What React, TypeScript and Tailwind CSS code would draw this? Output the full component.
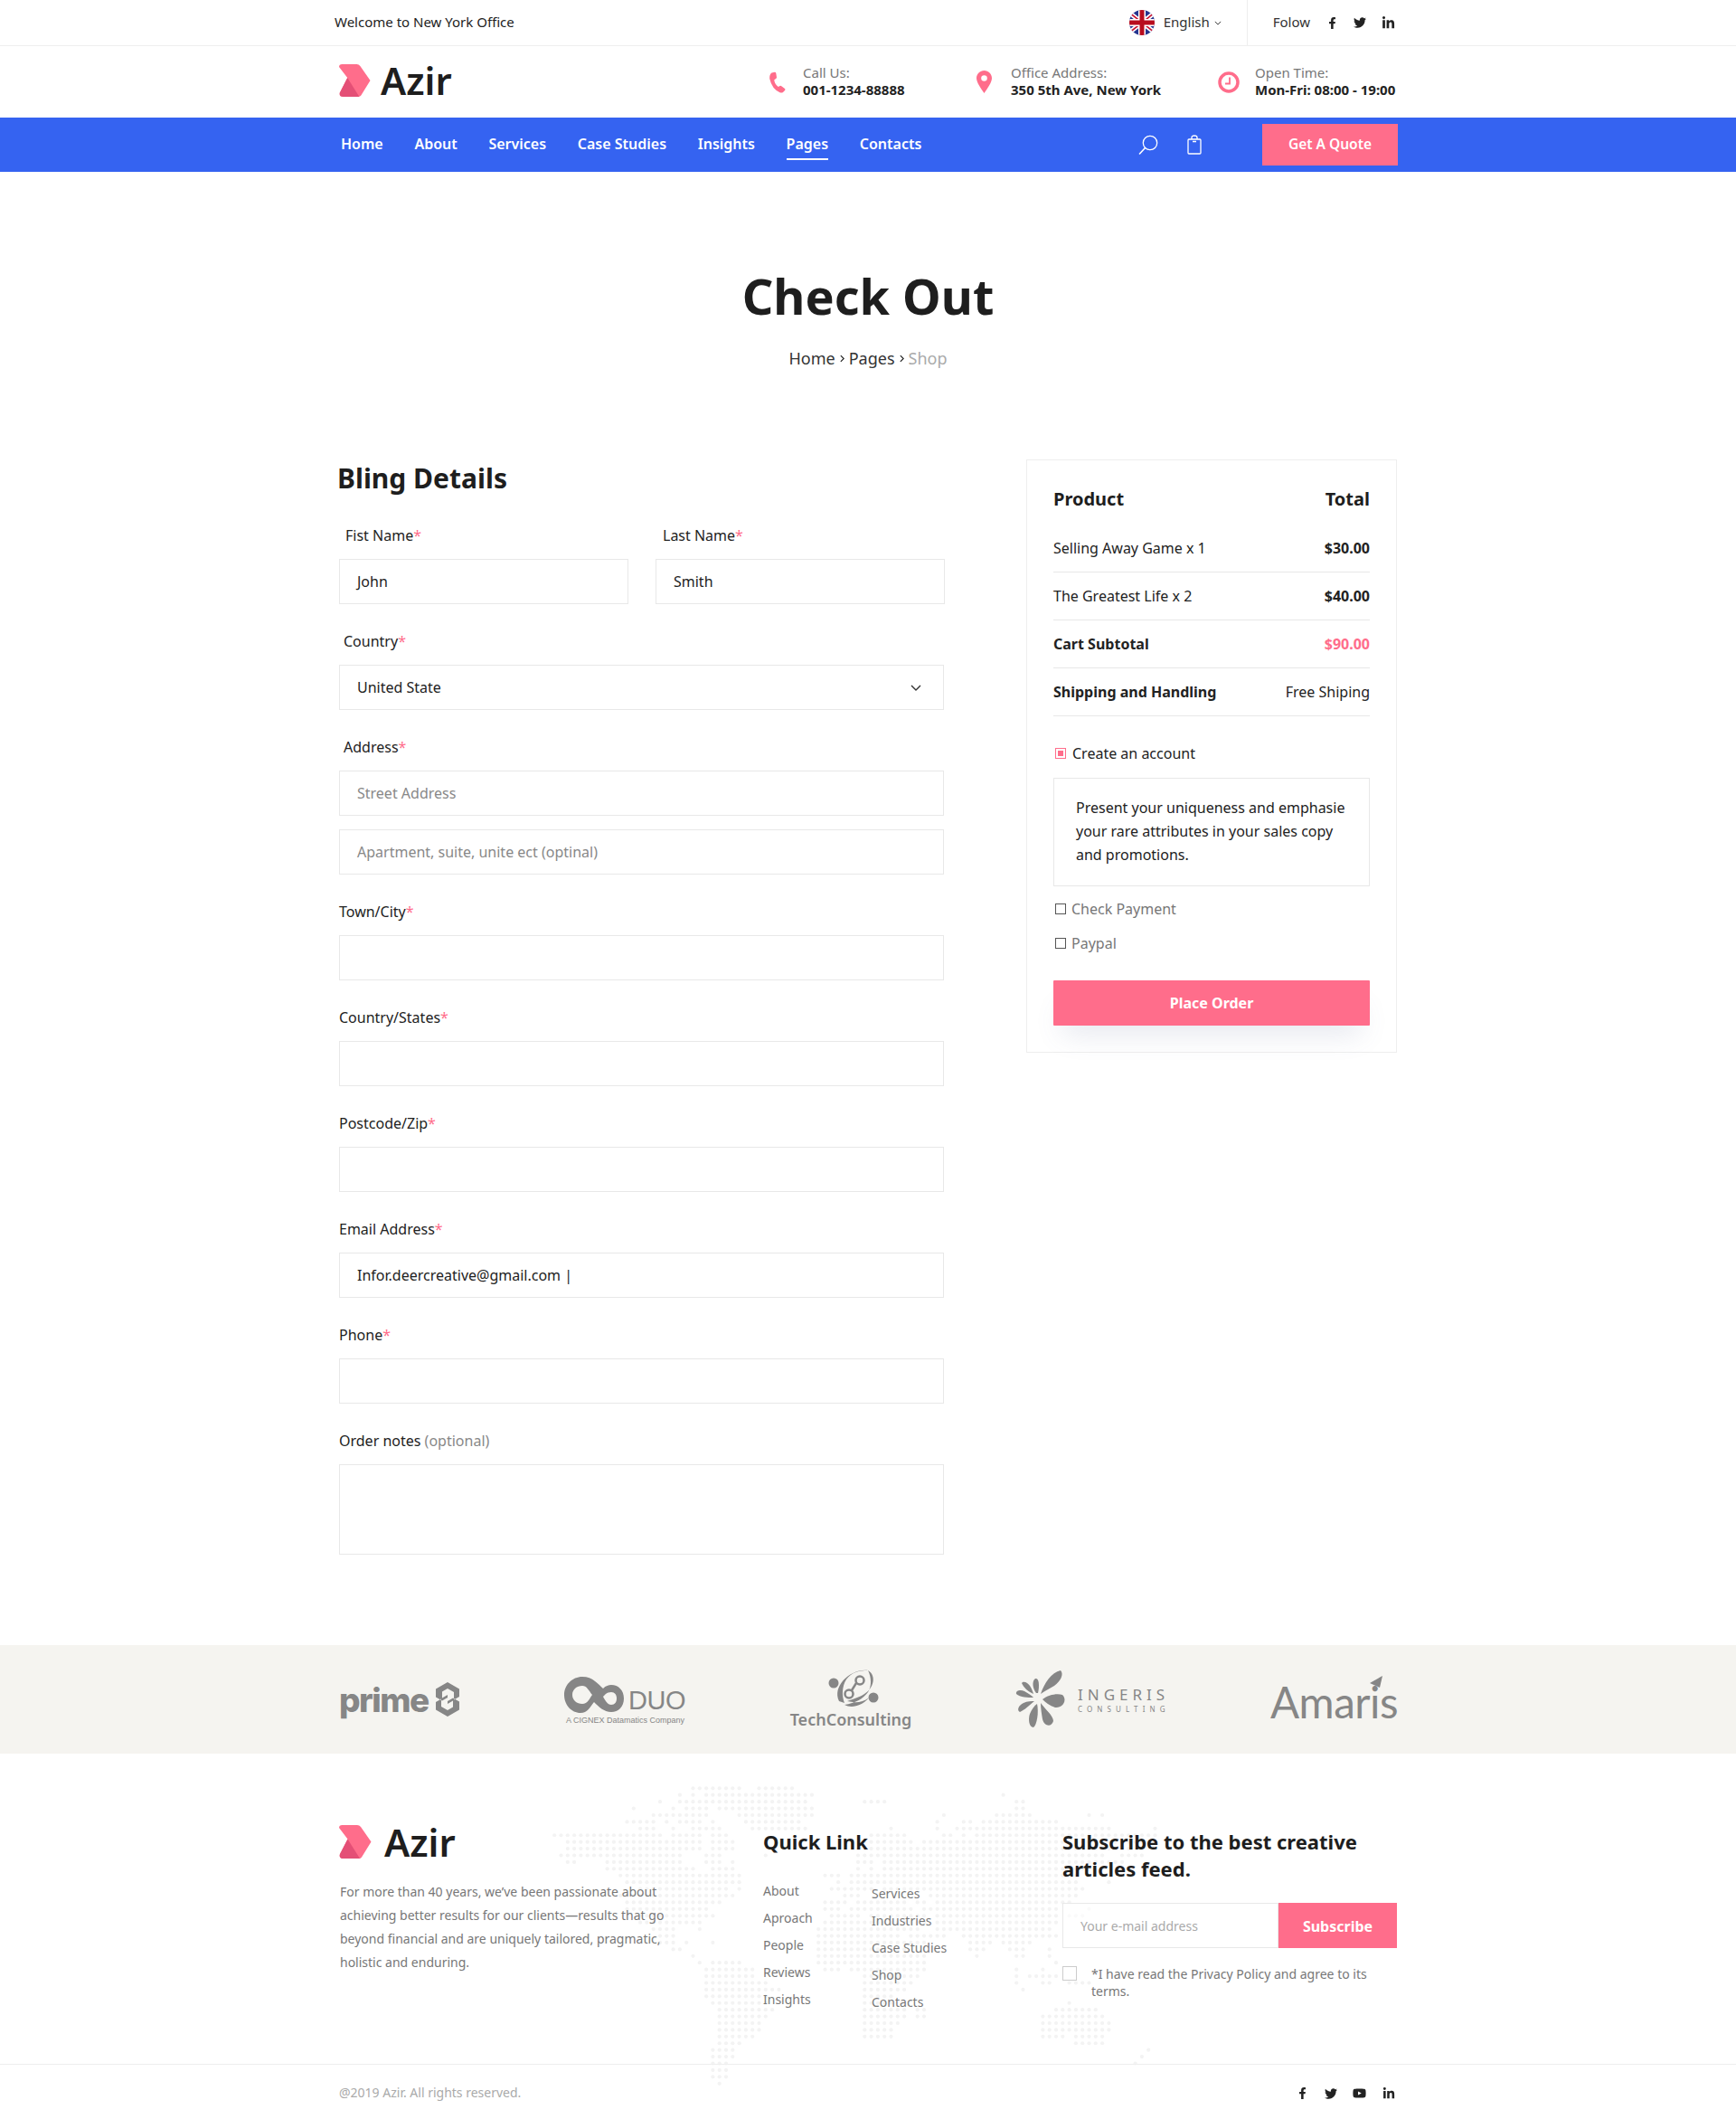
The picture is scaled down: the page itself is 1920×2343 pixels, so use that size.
import React from "react";
import { FaFacebookF, FaTwitter, FaLinkedinIn, FaYoutube } from "react-icons/fa";

const RAW: number[][] = [
  [767,809,820,820,836,836,850,876],
  [753,753,769,769,783,793,805,898,1112,1112],
  [731,731,753,787,797,890,955,975,1121,1129],
  [702,702,747,747,761,779,799,898,1127,1135],
  [724,779,820,898,1045,1045,1104,1142,1201,1201,1217,1217],
  [694,712,724,724,739,739,753,775,785,785,826,884,1037,1037,1066,1073,1089,1158,1171,1171],
  [708,726,747,747,769,793,834,890,985,985,1037,1037,1058,1219,1230,1230,1276,1276],
  [611,720,732,732,745,771,791,801,962,1002,1043,1052,1068,1068,1081,1276],
  [627,771,791,809,955,1010,1020,1276],
  [627,771,791,809,947,1245],
  [619,749,783,793,844,844,947,1222,1244,1265],
  [627,637,670,749,783,793,807,807,947,963,976,1238],
  [670,765,791,809,947,947,963,963,976,1207],
  [686,817,915,927,945,1188],
  [694,817,925,925,939,1188,1230,1230],
  [708,805,820,820,923,967,976,1196],
  [686,809,931,951,1027,1188],
  [694,793,915,935,950,1002,1012,1025,1035,1180],
  [694,779,915,927,945,1010,1020,1159,1171,1171,1201,1201],
  [708,787,923,951,962,1025,1035,1165,1186,1194],
  [708,771,915,963,970,1025,1035,1165],
  [724,741,777,777,908,1018,1035,1159],
  [732,741,902,995,1010,1041,1066,1165],
  [732,741,761,761,785,785,902,1025,1073,1096,1112,1136],
  [745,755,902,1002,1073,1085,1119,1135,1163,1163],
  [769,769,902,1025,1081,1081,1127,1135,1163,1163],
  [777,777,791,817,908,1025,1171,1171],
  [783,830,915,927,945,1025,1127,1127,1157,1157],
  [783,830,955,1018,1127,1127,1140,1165],
  [783,846,955,1010,1127,1127,1150,1150,1163,1163,1186,1201],
  [783,860,955,1002,1135,1135],
  [783,846,955,987],
  [791,846,955,987,1186,1186],
  [797,854,955,1002,1012,1024,1171,1211],
  [797,846,955,1002,1012,1024,1156,1219],
  [797,838,955,995,1156,1224],
  [797,838,955,987,1156,1224],
  [797,830,955,987,1156,1173,1192,1219],
  [797,817,1192,1219],
  [791,809,1268,1268],
  [791,809,1261,1261],
  [791,801,1253,1253],
  [791,801],
  [791,801],
  [799,799],
];

function DotMap() {
  const dots: React.ReactNode[] = [];
  RAW.forEach((row, i) => {
    const y = 38.3 + i * 7.42;
    for (let k = 0; k < row.length; k += 2) {
      const first = Math.round(row[k] / 7.3);
      const last = Math.round(row[k + 1] / 7.3);
      for (let n = first; n <= last; n++) {
        dots.push(<circle key={`${i}-${k}-${n}`} cx={n * 7.3} cy={y} r={2.1} fill="#f3f3f3" />);
      }
    }
  });
  return (
    <svg className="absolute left-0 top-0" width={1920} height={404} aria-hidden="true">
      {dots}
    </svg>
  );
}

function Mark({ className }: { className?: string }) {
  return (
    <svg viewBox="0 0 36 38" className={className}>
      <path d="M0 3.5Q0 .5 3.5.5H20Q22.5.5 24 2.500L35.500 19L25 36Q24 37.500 22 37.500H5Q-.5 37.500 1 32.500L9.500 16Z" fill="#ff6d8b" />
      <path d="M9.500 16L1 32.500Q-.5 37.500 5 37.500H23Z" fill="#e44f76" />
    </svg>
  );
}

function Flag() {
  return (
    <svg viewBox="0 0 28 28" className="h-7 w-7">
      <defs>
        <clipPath id="flagc"><circle cx="14" cy="14" r="14" /></clipPath>
      </defs>
      <g clipPath="url(#flagc)">
        <rect width="28" height="28" fill="#24348f" />
        <path d="M0 3L28 25M28 3L0 25" stroke="#fff" strokeWidth="5" />
        <path d="M0 3L28 25M28 3L0 25" stroke="#c8102e" strokeWidth="1.6" />
        <path d="M14 0V28M0 14H28" stroke="#fff" strokeWidth="8" />
        <path d="M14 0V28M0 14H28" stroke="#b80d1e" strokeWidth="5" />
      </g>
    </svg>
  );
}

function Star() {
  return <span className="text-[#ff6d8b]">*</span>;
}

function Field({ label, children, className = "mt-[29px] mr-px" }: { label: React.ReactNode; children: React.ReactNode; className?: string }) {
  return (
    <div className={className}>
      <div className="mb-[14px] h-6 text-[16px] leading-6 text-[#222]">{label}</div>
      {children}
    </div>
  );
}

function Box({ children, className = "" }: { children?: React.ReactNode; className?: string }) {
  return (
    <div className={`flex h-[50px] items-center border border-[#e8e8e8] px-[19px] pb-px text-[16px] text-[#222] ${className}`}>{children}</div>
  );
}

function SummaryRow({ left, right, leftClass = "", rightClass = "" }: { left: string; right: string; leftClass?: string; rightClass?: string }) {
  return (
    <div className="flex h-[53px] items-center justify-between border-b border-[#e8e8e8] text-[16px] text-[#222]">
      <span className={leftClass}>{left}</span>
      <span className={rightClass}>{right}</span>
    </div>
  );
}

function Info({ icon, top, bottom, className }: { icon: React.ReactNode; top: string; bottom: string; className: string }) {
  return (
    <div className={`flex items-center ${className}`}>
      {icon}
      <div className="mb-[2px] text-[15px] leading-[19px]">
        <div className="text-[#777]">{top}</div>
        <div className="font-bold text-[#222]">{bottom}</div>
      </div>
    </div>
  );
}

export default function App() {
  const nav = ["Home", "About", "Services", "Case Studies", "Insights", "Pages", "Contacts"];
  return (
    <div className="min-h-[2343px] bg-white font-['Noto_Sans',sans-serif] text-[#222]">
      {/* top bar */}
      <div className="h-[51px] border-b border-[#eeeeee]">
        <div className="mx-auto flex h-full w-[1172px] items-center text-[15px]">
          <span className="-ml-1 pb-[2px] text-[#222]">Welcome to New York Office</span>
          <div className="ml-auto flex h-full items-center">
            <Flag />
            <span className="ml-[10px] pb-[2px] text-[#333]">English</span>
            <svg viewBox="0 0 10 6" className="ml-[5px] h-[5px] w-2" fill="none" stroke="#333" strokeWidth="1.2"><path d="M1 1l4 4 4-4" /></svg>
            <div className="ml-[28px] h-full w-px bg-[#eeeeee]" />
            <span className="ml-[28px] pb-[2px] text-[#333]">Folow</span>
            <FaFacebookF className="ml-[18px] text-[13px] text-[#222]" />
            <FaTwitter className="ml-[17px] text-[14px] text-[#222]" />
            <FaLinkedinIn className="ml-[17px] text-[15px] text-[#222]" />
            <span className="w-[3px]" />
          </div>
        </div>
      </div>
      {/* header */}
      <div className="h-[79px]">
        <div className="mx-auto flex h-full w-[1172px] items-center">
          <div className="mb-[4px] flex items-center">
            <Mark className="ml-px h-[38px] w-[35px]" />
            <span className="ml-[11px] text-[42px] font-semibold leading-none text-[#1e1e1e]">Azir</span>
          </div>
          <div className="ml-auto flex items-center">
            <Info
              className="w-[233px]"
              icon={
                <svg viewBox="0 0 24 24" className="ml-px mr-[16px] h-6 w-6" fill="#ff6d8b">
                  <path d="M5.500 1.500L8.800 .8Q10 .8 10.300 2L11 6.600Q11 7.700 9.800 8.300L8.300 9.200Q8.300 13.800 12.800 17L14.500 16Q15.500 15.600 16.300 16.300L20 18.900Q21 20 20 21L18 23Q16.500 24 14.500 23.200Q5.800 19.500 3.200 8Q2.900 3 5.500 1.500Z" />
                </svg>
              }
              top="Call Us:"
              bottom="001-1234-88888"
            />
            <Info
              className="w-[267px]"
              icon={
                <svg viewBox="0 0 17 25" className="mr-[21px] h-[25px] w-[17px]" fill="#ff6d8b">
                  <path fillRule="evenodd" d="M8.500 0C3.800 0 0 3.800 0 8.500 0 13 5 20 8.500 25 12 20 17 13 17 8.500 17 3.800 13.200 0 8.500 0zm0 5.200a3.300 3.300 0 110 6.600 3.300 3.300 0 010-6.600z" />
                </svg>
              }
              top="Office Address:"
              bottom="350 5th Ave, New York"
            />
            <Info
              className="w-[199px]"
              icon={
                <svg viewBox="0 0 24 24" className="mr-[17px] h-6 w-6" fill="none" stroke="#ff6d8b">
                  <circle cx="12" cy="12" r="10" strokeWidth="3.500" />
                  <path d="M13 6.500V13.500H8" strokeWidth="1.800" />
                </svg>
              }
              top="Open Time:"
              bottom="Mon-Fri: 08:00 - 19:00"
            />
          </div>
        </div>
      </div>
      {/* nav */}
      <div className="h-[60px] bg-[#3563f1]">
        <div className="mx-auto flex h-full w-[1172px] items-center">
          <div className="ml-[3px] flex gap-[34.700px] pb-[2px]">
            {nav.map((n) => (
              <span key={n} className="relative text-[16px] font-semibold text-white">
                {n}
                {n === "Pages" && <span className="absolute -bottom-[6px] left-0 right-0 h-[2px] bg-white" />}
              </span>
            ))}
          </div>
          <div className="ml-auto flex items-center">
            <svg viewBox="0 0 22 22" className="h-[22px] w-[22px]" fill="none" stroke="#fff" strokeWidth="1.300">
              <circle cx="13" cy="9" r="7.700" />
              <path d="M7.500 14.500L1.500 21" strokeLinecap="round" strokeWidth="1.600" />
            </svg>
            <svg viewBox="0 0 16 22" className="ml-[32px] h-[22px] w-4" fill="none" stroke="#fff" strokeWidth="1.300">
              <rect x="1" y="5" width="14" height="16" rx="1" />
              <path d="M5 5V3Q5 1 8 1T11 3V5M6 7.500H10" />
            </svg>
            <div className="ml-[67px] flex h-[46px] w-[150px] items-center justify-center bg-[#ff6d8b] pb-px text-[15.500px] font-semibold text-white">Get A Quote</div>
          </div>
        </div>
      </div>
      {/* title */}
      <div className="pt-[97px] text-center">
        <h1 className="h-20 text-[54px] font-bold leading-[80px] text-[#1e1e1e]">Check Out</h1>
        <div className="mt-[15px] flex h-7 items-center justify-center text-[18px] leading-7 text-[#333]">
          <span>Home</span>
          <svg viewBox="0 0 6 10" className="mx-[5px] h-[9px] w-[5px]" fill="none" stroke="#222" strokeWidth="1.400"><path d="M1 1l4 4-4 4" /></svg>
          <span>Pages</span>
          <svg viewBox="0 0 6 10" className="mx-[5px] h-[9px] w-[5px]" fill="none" stroke="#222" strokeWidth="1.400"><path d="M1 1l4 4-4 4" /></svg>
          <span className="text-[#aaa]">Shop</span>
        </div>
      </div>
      {/* main */}
      <div className="mx-auto mt-[98px] flex w-[1172px] items-start justify-between">
        <div className="w-[671px] pt-px">
          <h2 className="-ml-px h-10 text-[30px] font-bold leading-10 text-[#1e1e1e]">Bling Details</h2>
          <div className="ml-px">
            <div className="mt-[31px] grid grid-cols-2 gap-[30px]">
              <Field className="" label={<span className="ml-[7px]">Fist Name<Star /></span>}>
                <Box>John</Box>
              </Field>
              <Field className="" label={<span className="ml-[8px]">Last Name<Star /></span>}>
                <Box>Smith</Box>
              </Field>
            </div>
            <Field label={<span className="ml-[5px]">Country<Star /></span>}>
              <Box className="justify-between pr-[24px]">
                United State
                <svg viewBox="0 0 12 8" className="mt-[2px] h-2 w-3" fill="none" stroke="#333" strokeWidth="1.400"><path d="M1 1l5 5 5-5" /></svg>
              </Box>
            </Field>
            <Field label={<span className="ml-[5px]">Address<Star /></span>}>
              <Box className="text-[#888]">Street Address</Box>
              <Box className="mt-[15px] text-[#888]">Apartment, suite, unite ect (optinal)</Box>
            </Field>
            <Field label={<>Town/City<Star /></>}>
              <Box />
            </Field>
            <Field label={<>Country/States<Star /></>}>
              <Box />
            </Field>
            <Field label={<>Postcode/Zip<Star /></>}>
              <Box />
            </Field>
            <Field label={<>Email Address<Star /></>}>
              <Box>Infor.deercreative@gmail.com |</Box>
            </Field>
            <Field label={<>Phone<Star /></>}>
              <Box />
            </Field>
            <Field label={<>Order notes <span className="text-[#888]">(optional)</span></>}>
              <Box className="!h-[100px]" />
            </Field>
          </div>
        </div>
        <aside className="mr-px w-[410px] border border-[#eeeeee] px-[29px] pb-[29px] pt-[30px]">
          <div className="flex h-[26px] items-center justify-between text-[20px] font-bold text-[#1e1e1e]">
            <span>Product</span>
            <span>Total</span>
          </div>
          <div className="mt-[15px]">
            <SummaryRow left="Selling Away Game x 1" right="$30.00" rightClass="font-bold" />
            <SummaryRow left="The Greatest Life x 2" right="$40.00" rightClass="font-bold" />
            <SummaryRow left="Cart Subtotal" right="$90.00" leftClass="font-bold" rightClass="font-bold text-[#ff6d8b]" />
            <SummaryRow left="Shipping and Handling" right="Free Shiping" leftClass="font-bold" />
          </div>
          <div className="mt-[29px] flex h-6 items-center text-[16px] text-[#222]">
            <span className="ml-[2px] mr-[7px] flex h-3 w-3 items-center justify-center border border-[#ff6d8b]">
              <span className="h-[6px] w-[6px] bg-[#ff6d8b]" />
            </span>
            Create an account
          </div>
          <div className="mt-[15px] border border-[#e8e8e8] pb-[21px] pl-6 pr-4 pt-[19px] text-[16px] leading-[26px] text-[#222]">
            Present your uniqueness and emphasie your rare attributes in your sales copy and promotions.
          </div>
          <div className="mt-[13px] flex h-6 items-center text-[16px] text-[#777]">
            <span className="ml-[2px] mr-[6px] h-3 w-3 border border-[#555]" />
            Check Payment
          </div>
          <div className="mt-[14px] flex h-6 items-center text-[16px] text-[#777]">
            <span className="ml-[2px] mr-[6px] h-3 w-3 border border-[#555]" />
            Paypal
          </div>
          <div className="mt-[29px] flex h-[50px] items-center justify-center rounded-[1px] bg-[#ff6d8b] pb-px text-[16px] font-bold text-white shadow-[0_20px_30px_-10px_rgba(90,100,150,0.15)]">
            Place Order
          </div>
        </aside>
      </div>
      {/* logos */}
      <div className="mt-[100px] h-[120px] bg-[#f5f4f0]">
        <div className="mx-auto flex h-full w-[1172px] items-center justify-between pl-px text-[#868686]">
          <div className="flex w-[135px] items-center">
            <span className="font-['Inter',sans-serif] text-[37px] font-extrabold leading-none tracking-[-1.5px]">prime</span>
            <svg viewBox="0 0 26 38" className="ml-[8px] h-[38px] w-[26px]" fill="#868686">
              <path fillRule="evenodd" d="M13 0L26 7.500V16L20 19.500V11L13 7 7 10.500V17.500L13 14V21L19 17.500 26 21.500V30.500L13 38 0 30.500V22L6 18.500V27L13 31 19 27.500V20.500L13 24V17L7 20.500 0 16.500V7.500Z" />
            </svg>
          </div>
          <div className="mt-[4px] flex w-[133px] flex-col items-start">
            <div className="flex items-end">
              <svg viewBox="0 0 66 40" className="-ml-[2px] h-10 w-[66px]" fill="#868686">
                <path fillRule="evenodd" d="M20 0C32 0 37 8 43 13 46 10 49 9 52 9 60 9 66 15 66 24S60 39 52 39C44 39 38 33 33 28 28 34 26 40 18 40 8 40 0 31 0 20S9 0 20 0ZM20 10C14 10 9 14 9 20S14 30 20 30C26 30 28 24 31 20 27 15 25 10 20 10ZM52 17C47 17 45 20 43 22 45 26 48 31 52 31 56 31 58 28 58 24S56 17 52 17Z" />
              </svg>
              <span className="ml-[5px] font-['Liberation_Sans',sans-serif] text-[29px] leading-[28px] tracking-[-0.5px]">DUO</span>
            </div>
            <span className="mt-[2px] whitespace-nowrap font-['Liberation_Sans',sans-serif] text-[9px] leading-3">A CIGNEX Datamatics Company</span>
          </div>
          <div className="flex w-[132px] flex-col items-center">
            <svg viewBox="0 0 56 44" className="ml-[5px] h-[44px] w-[56px]">
              <circle cx="6" cy="16" r="5.500" fill="#868686" />
              <circle cx="50" cy="32" r="5.500" fill="#868686" />
              <path d="M12 36C4 20 24 0 44 2c-10 0-18 2-24 10-5 8-5 18-2 26Z" fill="#868686" />
              <path d="M44 2C54 8 50 22 40 28c-6 4-14 6-19 8 8 2 17 2 24-4-8 10-20 12-27 8 12-2 20-6 26-14 4-6 4-16 0-24Z" fill="#868686" />
              <circle cx="35" cy="13" r="4.500" fill="none" stroke="#868686" strokeWidth="2.500" />
              <circle cx="23" cy="28" r="4.500" fill="none" stroke="#868686" strokeWidth="2.500" />
              <path d="M31 16L26 24" stroke="#868686" strokeWidth="2.500" />
            </svg>
            <span className="whitespace-nowrap text-[18px] font-semibold leading-6">TechConsulting</span>
          </div>
          <div className="flex w-[166px] items-center">
            <svg viewBox="0 0 56 64" className="h-16 w-14 shrink-0" fill="#868686">
              <path d="M28 26C32 14 40 2 50 0 54 4 50 12 43 17 38 20 32 23 28 26Z" />
              <path d="M23 25C19 20 18 12 22 9 26 8 27 16 25 25Z" />
              <path d="M30 32C36 27 46 25 52 27 58 33 52 42 44 41 38 39 33 35 30 32Z" />
              <path d="M28 36C32 42 42 50 42 56 40 63 32 62 30 54 29 48 28 42 28 36Z" />
              <path d="M24 37C26 46 24 60 20 63 15 63 14 54 16 48 18 43 21 39 24 37Z" />
              <path d="M21 34C16 38 10 44 5 46 1 44 4 38 9 36 13 34 18 34 21 34Z" />
              <path d="M20 30C14 30 5 30 1 26 0 22 6 21 10 23 14 25 18 28 20 30Z" />
              <path d="M20 26C15 24 9 19 7 14 9 11 14 14 16 17 18 20 19 23 20 26Z" />
            </svg>
            <div className="ml-[13px] shrink-0 text-[#868686]">
              <div className="whitespace-nowrap text-[17px] leading-[20px] tracking-[5px]">INGERIS</div>
              <div className="whitespace-nowrap text-[8px] leading-[11px] tracking-[5.100px]">CONSULTING</div>
            </div>
          </div>
          <div className="relative mt-[6px] font-['Lato',sans-serif] text-[47.500px] leading-none tracking-[-0.5px]">
            Amaris
            <svg viewBox="0 0 14 14" className="absolute -top-[5px] right-[17px] h-[14px] w-[14px]" fill="#868686"><path d="M14 0L0 8 11 13Z" /></svg>
          </div>
        </div>
      </div>
      {/* footer */}
      <footer className="relative overflow-hidden">
        <DotMap />
        <div className="relative mx-auto flex h-[343px] w-[1172px] pt-[80px]">
          <div className="w-[470px]">
            <div className="-mt-[2px] flex items-center">
              <Mark className="ml-px h-[39px] w-[36px]" />
              <span className="ml-[14px] text-[42px] font-semibold leading-[39px] text-[#1e1e1e]">Azir</span>
            </div>
            <p className="ml-[2px] mt-[23px] w-[366px] text-[14px] leading-[26px] text-[#777]">
              For more than 40 years, we’ve been passionate about achieving better results for our clients—results that go beyond financial and are uniquely tailored, pragmatic, holistic and enduring.
            </p>
          </div>
          <div className="w-[331px] pt-[2px]">
            <h3 className="h-[30px] text-[22px] font-bold leading-[30px] text-[#1e1e1e]">Quick Link</h3>
            <div className="mt-[25px] flex text-[14px] leading-[30px] text-[#777]">
              <div className="w-[120px]">
                {["About", "Aproach", "People", "Reviews", "Insights"].map((t) => (
                  <div key={t}>{t}</div>
                ))}
              </div>
              <div className="pt-[3px]">
                {["Services", "Industries", "Case Studies", "Shop", "Contacts"].map((t) => (
                  <div key={t}>{t}</div>
                ))}
              </div>
            </div>
          </div>
          <div className="w-[371px] pt-[2px]">
            <h3 className="text-[22px] font-bold leading-[30px] text-[#1e1e1e]">Subscribe to the best creative articles feed.</h3>
            <div className="mr-px mt-[23px] flex h-[50px]">
              <div className="flex w-[239px] items-center border border-[#e8e8e8] bg-white/60 pl-[19px] text-[14px] text-[#aaa]">Your e-mail address</div>
              <div className="flex flex-1 items-center justify-center bg-[#ff6d8b] pt-px text-[16px] font-bold text-white">Subscribe</div>
            </div>
            <div className="mt-[20px] flex">
              <span className="h-4 w-4 shrink-0 border border-[#cccccc]" />
              <span className="-mt-px ml-4 text-[14px] leading-[19px] text-[#777]">*I have read the Privacy Policy and agree to its terms.</span>
            </div>
          </div>
        </div>
        <div className="relative h-[61px] border-t border-[#eeeeee]">
          <div className="mx-auto flex h-full w-[1172px] items-center">
            <span className="ml-px text-[14px] text-[#aaa]">@2019 Azir. All rights reserved.</span>
            <div className="ml-auto mr-[3px] mt-[3px] flex items-center text-[#222]">
              <FaFacebookF className="text-[13px]" />
              <FaTwitter className="ml-[18px] text-[14px]" />
              <FaYoutube className="ml-[17px] text-[15px]" />
              <FaLinkedinIn className="ml-[18px] text-[14px]" />
            </div>
          </div>
        </div>
      </footer>
    </div>
  );
}
